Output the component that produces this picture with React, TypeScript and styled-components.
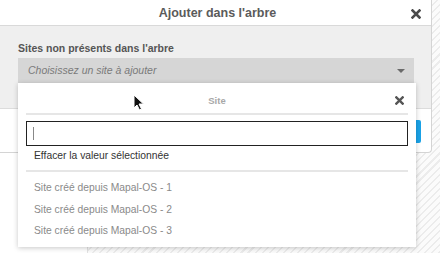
import React from 'react'
import { styled, createGlobalStyle } from 'styled-components'

const GlobalStyle = createGlobalStyle`
  html, body {
    margin: 0;
    padding: 0;
    background: #ffffff;
  }
  body {
    font-family: "Liberation Sans", Arial, sans-serif;
  }
`

const Page = styled.div`
  position: relative;
  width: 440px;
  height: 253px;
  overflow: hidden;
  background-color: #fafafa;
  background-image: repeating-linear-gradient(
    -45deg,
    #ececec 0px,
    #ececec 1.5px,
    #fbfbfb 1.5px,
    #fbfbfb 5px
  );
`

const SidePanel = styled.div`
  position: absolute;
  left: 0;
  top: 0;
  width: 87px;
  height: 253px;
  background: #ffffff;
  border-right: 1px solid #e2e2e2;
`

const Modal = styled.div`
  position: relative;
  margin-left: -5px;
  width: 437px;
  height: 153px;
  background: #ffffff;
  border: 1px solid #d4d4d4;
  border-top: none;
  border-radius: 0 0 4px 4px;
  box-sizing: border-box;
  display: flex;
  flex-direction: column;
`

const ModalHeader = styled.div`
  height: 26px;
  flex: none;
  display: flex;
  align-items: center;
  justify-content: center;
  position: relative;
  border-bottom: 1px solid #d9d9d9;
  box-sizing: border-box;
`

const ModalTitle = styled.div`
  font-size: 12.5px;
  font-weight: 700;
  color: #5b5b5b;
  padding-left: 8px;
`

const CloseButton = styled.div<{ $right: number; $top: number }>`
  position: absolute;
  right: ${p => p.$right}px;
  top: ${p => p.$top}px;
  display: flex;
  svg {
    display: block;
  }
`

const ModalBody = styled.div`
  height: 82px;
  flex: none;
  background: #efefef;
  padding: 16px 17px 0 22px;
  box-sizing: border-box;
`

const FieldLabel = styled.div`
  font-size: 10.5px;
  font-weight: 700;
  color: #555555;
  margin-bottom: 4px;
`

const SelectBox = styled.div`
  height: 25px;
  background: #d6d6d6;
  display: flex;
  align-items: center;
  justify-content: space-between;
  padding: 0 9px 0 10px;
`

const Placeholder = styled.span`
  font-size: 10.5px;
  font-style: italic;
  color: #7a7a7a;
  margin-top: -2px;
`

const Caret = styled.span`
  width: 0;
  height: 0;
  border-left: 4px solid transparent;
  border-right: 4px solid transparent;
  border-top: 4px solid #6a6a6a;
`

const ModalFooter = styled.div`
  flex: 1;
  border-top: 1px solid #dcdcdc;
  display: flex;
  justify-content: flex-end;
  padding: 11px 10px 0 0;
`

const PrimaryButton = styled.div`
  width: 60px;
  height: 23px;
  background: #1aa3e8;
  border-radius: 2px;
`

const Dropdown = styled.div`
  position: absolute;
  left: 22px;
  top: 83px;
  width: 398px;
  height: 164px;
  background: #ffffff;
  box-shadow: 0 1px 5px rgba(0, 0, 0, 0.22);
  padding: 0 8px;
  box-sizing: border-box;
`

const DropdownHeader = styled.div`
  position: relative;
  height: 30px;
  display: flex;
  align-items: center;
  justify-content: center;
  border-bottom: 2px solid #e6e6e6;
`

const DropdownTitle = styled.div`
  font-size: 9.5px;
  font-weight: 700;
  color: #a8a8a8;
  margin-top: 4px;
`

const SearchInput = styled.div`
  margin: 6px 0 0 0;
  height: 25px;
  border: 1.5px solid #222222;
  box-sizing: border-box;
  display: flex;
  align-items: center;
  padding-left: 6px;
`

const TextCaret = styled.span`
  width: 1px;
  height: 13px;
  background: #888888;
`

const ClearOption = styled.div`
  font-size: 10.3px;
  color: #333333;
  padding: 4px 0 0 8px;
  height: 20px;
  border-bottom: 2px solid #e6e6e6;
`

const OptionList = styled.div`
  padding-top: 5px;
`

const Option = styled.div`
  font-size: 10.3px;
  color: #8a8a8a;
  height: 21.5px;
  display: flex;
  align-items: center;
  padding-left: 8px;
`

const Cursor = styled.svg`
  position: absolute;
  left: 133px;
  top: 94px;
`

const Cross = ({ size, color, stroke }: { size: number; color: string; stroke: number }) => (
  <svg width={size} height={size} viewBox="0 0 10 10">
    <path d="M1.5 1.5 L8.5 8.5 M8.5 1.5 L1.5 8.5" stroke={color} strokeWidth={stroke} strokeLinecap="square" />
  </svg>
)

const sites = [1, 2, 3].map(n => `Site créé depuis Mapal-OS - ${n}`)

const App = () => {
  return (
    <>
      <GlobalStyle />
      <Page>
        <SidePanel />
        <Modal>
          <ModalHeader>
            <ModalTitle>Ajouter dans l'arbre</ModalTitle>
            <CloseButton $right={10} $top={9}>
              <Cross size={10} color="#4a4a4a" stroke={2.6} />
            </CloseButton>
          </ModalHeader>
          <ModalBody>
            <FieldLabel>Sites non présents dans l'arbre</FieldLabel>
            <SelectBox>
              <Placeholder>Choisissez un site à ajouter</Placeholder>
              <Caret />
            </SelectBox>
          </ModalBody>
          <ModalFooter>
            <PrimaryButton />
          </ModalFooter>
          <Dropdown>
            <DropdownHeader>
              <DropdownTitle>Site</DropdownTitle>
              <CloseButton $right={4} $top={13}>
                <Cross size={9} color="#555555" stroke={2.6} />
              </CloseButton>
            </DropdownHeader>
            <SearchInput>
              <TextCaret />
            </SearchInput>
            <ClearOption>Effacer la valeur sélectionnée</ClearOption>
            <OptionList>
              {sites.map(s => (
                <Option key={s}>{s}</Option>
              ))}
            </OptionList>
          </Dropdown>
        </Modal>
        <Cursor width="12" height="17" viewBox="0 0 12 17">
          <path d="M1 1 L1 14 L4 11 L6.5 16 L8.5 15 L6 10 L10.5 10 Z" fill="#111" stroke="#fff" strokeWidth="1" />
        </Cursor>
      </Page>
    </>
  )
}

export default App
